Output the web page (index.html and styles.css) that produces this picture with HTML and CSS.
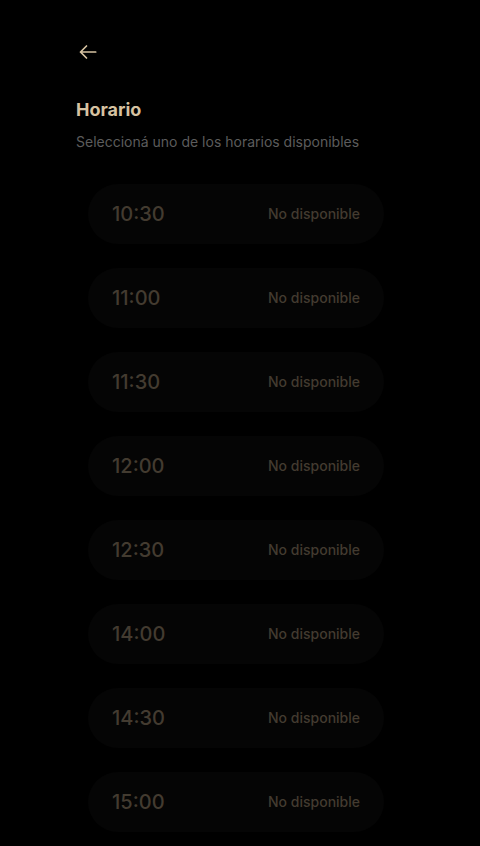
FILE: index.html
```html
<!DOCTYPE html>
<html lang="es">
<head>
<meta charset="utf-8">
<meta name="viewport" content="width=device-width, initial-scale=1">
<title>Horario</title>
<link rel="stylesheet" href="styles.css">
</head>
<body>
<main class="page">
  <button class="back" type="button" aria-label="Volver">
    <svg class="back-icon" viewBox="0 0 24 24" aria-hidden="true"><path d="M19.700 12H4.500M10.500 6l-6 6 6 6"/></svg>
  </button>
  <h1 class="title">Horario</h1>
  <p class="subtitle">Seleccioná uno de los horarios disponibles</p>
  <div class="slots">
    <button class="slot" type="button" disabled><span class="time">10:30</span><span class="status">No disponible</span></button>
    <button class="slot" type="button" disabled><span class="time">11:00</span><span class="status">No disponible</span></button>
    <button class="slot" type="button" disabled><span class="time">11:30</span><span class="status">No disponible</span></button>
    <button class="slot" type="button" disabled><span class="time">12:00</span><span class="status">No disponible</span></button>
    <button class="slot" type="button" disabled><span class="time">12:30</span><span class="status">No disponible</span></button>
    <button class="slot" type="button" disabled><span class="time">14:00</span><span class="status">No disponible</span></button>
    <button class="slot" type="button" disabled><span class="time">14:30</span><span class="status">No disponible</span></button>
    <button class="slot" type="button" disabled><span class="time">15:00</span><span class="status">No disponible</span></button>
  </div>
</main>
</body>
</html>
```
FILE: styles.css
```css
* {
  box-sizing: border-box;
}

body {
  margin: 0;
  background: #000;
  color: #d6c2a1;
  font-family: Inter, "Liberation Sans", sans-serif;
}

.page {
  max-width: 480px;
  margin: 0 auto;
  padding: 40px 76px 14px;
}

.back {
  display: block;
  padding: 0;
  border: 0;
  background: none;
  color: inherit;
  cursor: pointer;
}

.back-icon {
  display: block;
  width: 24px;
  height: 24px;
  fill: none;
  stroke: currentColor;
  stroke-width: 1.700;
  stroke-linecap: round;
  stroke-linejoin: round;
}

.title {
  margin: 32px 0 8px;
  font-size: 18px;
  line-height: 28px;
  font-weight: 700;
}

.subtitle {
  margin: 0;
  color: #5c5c5c;
  font-size: 14px;
  line-height: 20px;
}

.slots {
  display: flex;
  flex-direction: column;
  gap: 24px;
  margin: 32px 20px 0 12px;
}

.slot {
  display: flex;
  align-items: center;
  justify-content: space-between;
  height: 60px;
  padding: 0 24px;
  border: 0;
  border-radius: 30px;
  background: #050505;
  color: #433b30;
  font-family: inherit;
  font-weight: 500;
}

.time {
  font-size: 20px;
  font-kerning: none;
  line-height: 28px;
}

.status {
  font-size: 14px;
  line-height: 20px;
}
```
